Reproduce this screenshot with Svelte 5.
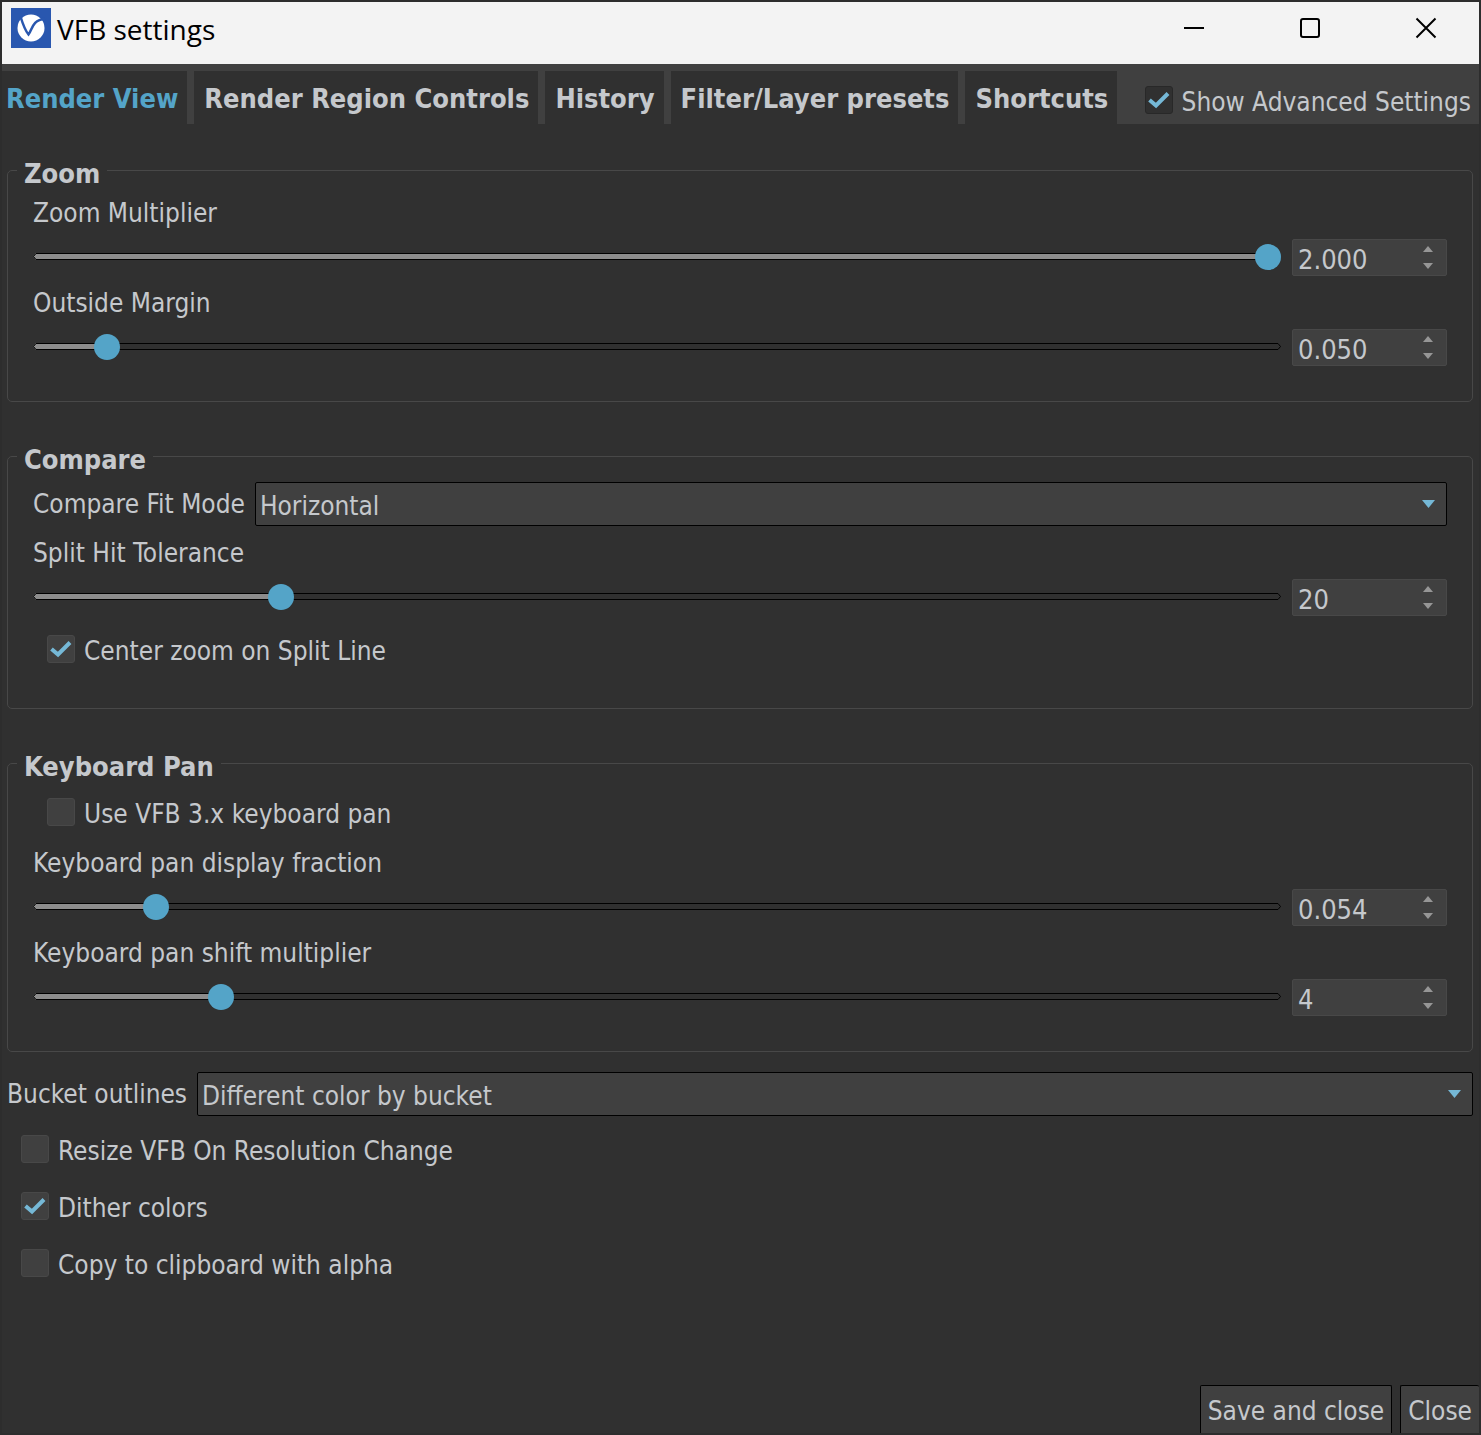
<script>
  const tabs = ['Render View', 'Render Region Controls', 'History', 'Filter/Layer presets', 'Shortcuts'];
  let active = $state(0);
  let advanced = $state(true);

  let fitMode = $state('Horizontal');
  let centerZoom = $state(true);
  let legacyPan = $state(false);
  let outlines = $state('Different color by bucket');
  let resizeOnChange = $state(false);
  let dither = $state(true);
  let copyAlpha = $state(false);

  let zoom = $state([
    { id: 'zoom-multiplier', label: 'Zoom Multiplier', value: 2, min: 1, max: 2, step: 0.001, digits: 3 },
    { id: 'outside-margin', label: 'Outside Margin', value: 0.05, min: 0, max: 1, step: 0.001, digits: 3 }
  ]);
  let compare = $state([
    { id: 'split-tolerance', label: 'Split Hit Tolerance', value: 20, min: 1, max: 100, step: 1, digits: 0 }
  ]);
  let pan = $state([
    { id: 'pan-fraction', label: 'Keyboard pan display fraction', value: 0.054, min: 0.01, max: 0.5, step: 0.001, digits: 3 },
    { id: 'pan-shift', label: 'Keyboard pan shift multiplier', value: 4, min: 1, max: 22, step: 1, digits: 0 }
  ]);

  function nudge(field, direction) {
    const next = Number(field.value) + direction * field.step;
    field.value = Math.min(field.max, Math.max(field.min, next));
  }

  function commit(field, event) {
    const typed = Number(event.currentTarget.value);
    if (!Number.isNaN(typed)) field.value = Math.min(field.max, Math.max(field.min, typed));
  }

  const fraction = (field) => (field.value - field.min) / (field.max - field.min);
</script>

{#snippet slider(field)}
  <div class="field">
    <label class="label" for={field.id}>{field.label}</label>
    <div class="slider-row">
      <div class="slider" style:--fraction={fraction(field)}>
        <svg class="tip" viewBox="0 0 3 7" aria-hidden="true"><path class="tip-fill" d="M3 0L0 3.5L3 7Z" /><path class="tip-line" d="M3 .5L.5 3.5L3 6.5" /></svg>
        <div class="track"></div>
        <svg class="tip" viewBox="0 0 3 7" aria-hidden="true"><path class="tip-line" d="M0 .5L2.5 3.5L0 6.5" /></svg>
        <input id={field.id} type="range" min={field.min} max={field.max} step={field.step} bind:value={field.value} />
      </div>
      <div class="spin">
        <input type="text" inputmode="decimal" aria-label={`${field.label} value`} value={Number(field.value).toFixed(field.digits)} onchange={(e) => commit(field, e)} />
        <div class="steps">
          <button type="button" aria-label={`Increase ${field.label}`} onclick={() => nudge(field, 1)}>
            <svg width="10" height="6" viewBox="0 0 10 6"><path d="M0 6L5 0L10 6Z" /></svg>
          </button>
          <button type="button" aria-label={`Decrease ${field.label}`} onclick={() => nudge(field, -1)}>
            <svg width="10" height="6" viewBox="0 0 10 6"><path d="M0 0L5 6L10 0Z" /></svg>
          </button>
        </div>
      </div>
    </div>
  </div>
{/snippet}

{#snippet tick()}
  <svg class="tick" viewBox="0 0 28 28" aria-hidden="true"><path d="M4.5 14L11 19.5L23 7.500" /></svg>
{/snippet}

{#snippet chevron()}
  <svg class="chevron" width="13" height="8" viewBox="0 0 13 8" aria-hidden="true"><path d="M0 0H13L6.5 8Z" /></svg>
{/snippet}

<div class="window">
  <header class="titlebar">
    <svg class="logo" viewBox="0 0 40 40" aria-hidden="true">
      <rect width="40" height="40" fill="#2957af" />
      <circle cx="20" cy="20" r="13.500" fill="#fff" />
      <path d="M9.500 8.500C11.500 15 14 22.500 17.500 26.500C21 22.500 21 11.500 34 11" fill="none" stroke="#2957af" stroke-width="2.500" />
    </svg>
    <h1>VFB settings</h1>
    <div class="window-controls">
      <button type="button" aria-label="Minimize"><svg width="22" height="22" viewBox="0 0 22 22"><path d="M1 11H21" /></svg></button>
      <button type="button" aria-label="Maximize"><svg width="22" height="22" viewBox="0 0 22 22"><rect x="2" y="2" width="18" height="18" rx="2" /></svg></button>
      <button type="button" aria-label="Close window"><svg width="22" height="22" viewBox="0 0 22 22"><path d="M1.500 1.500L20.500 20.500M20.500 1.500L1.500 20.500" /></svg></button>
    </div>
  </header>

  <nav class="tabbar">
    <div class="tabs" role="tablist">
      {#each tabs as tab, i}
        <button type="button" role="tab" class="tab" class:active={active === i} aria-selected={active === i} onclick={() => (active = i)}>{tab}</button>
      {/each}
    </div>
    <label class="check advanced">
      <span class="box"><input type="checkbox" bind:checked={advanced} />{@render tick()}</span>
      Show Advanced Settings
    </label>
  </nav>

  <main>
    <fieldset>
      <legend>Zoom</legend>
      <div class="stack">
        {#each zoom as field}{@render slider(field)}{/each}
      </div>
    </fieldset>

    <fieldset>
      <legend>Compare</legend>
      <div class="stack">
        <div class="select-row">
          <label class="label" for="fit-mode">Compare Fit Mode</label>
          <div class="select">
            <select id="fit-mode" bind:value={fitMode}>
              <option>Horizontal</option>
              <option>Vertical</option>
            </select>
            {@render chevron()}
          </div>
        </div>
        {#each compare as field}{@render slider(field)}{/each}
        <label class="check">
          <span class="box"><input type="checkbox" bind:checked={centerZoom} />{@render tick()}</span>
          Center zoom on Split Line
        </label>
      </div>
    </fieldset>

    <fieldset>
      <legend>Keyboard Pan</legend>
      <div class="stack">
        <label class="check">
          <span class="box"><input type="checkbox" bind:checked={legacyPan} />{@render tick()}</span>
          Use VFB 3.x keyboard pan
        </label>
        {#each pan as field}{@render slider(field)}{/each}
      </div>
    </fieldset>

    <div class="stack">
      <div class="select-row">
        <label class="label" for="outlines">Bucket outlines</label>
        <div class="select">
          <select id="outlines" bind:value={outlines}>
            <option>Different color by bucket</option>
            <option>Same color</option>
          </select>
          {@render chevron()}
        </div>
      </div>
      <label class="check">
        <span class="box"><input type="checkbox" bind:checked={resizeOnChange} />{@render tick()}</span>
        Resize VFB On Resolution Change
      </label>
      <label class="check">
        <span class="box"><input type="checkbox" bind:checked={dither} />{@render tick()}</span>
        Dither colors
      </label>
      <label class="check">
        <span class="box"><input type="checkbox" bind:checked={copyAlpha} />{@render tick()}</span>
        Copy to clipboard with alpha
      </label>
    </div>
  </main>

  <footer>
    <button type="button" class="action">Save and close</button>
    <button type="button" class="action">Close</button>
  </footer>
</div>

<style>
  :global(body) {
    background: #303030;
  }

  .window {
    --bg: #303030;
    --raised: #404040;
    --edge: #484848;
    --text: #c5c8cc;
    --accent: #54a4c8;
    --accent-soft: #75b8d6;
    box-sizing: border-box;
    min-height: 100vh;
    display: flex;
    flex-direction: column;
    border: 2px solid #2d2d2d;
    background: var(--bg);
    color: var(--text);
    font-family: "DejaVu Sans Condensed", "DejaVu Sans", sans-serif;
    font-size: 26px;
    line-height: 34px;
  }

  button,
  input,
  select {
    box-sizing: border-box;
    margin: 0;
    padding: 0;
    border: 0;
    background: none;
    color: inherit;
    font: inherit;
  }

  svg {
    display: block;
  }

  .titlebar {
    display: flex;
    align-items: flex-start;
    height: 62px;
    background: #f3f3f3;
    color: #000;
  }

  .logo {
    width: 40px;
    height: 40px;
    margin: 6px 6px 0 9px;
  }

  h1 {
    flex: 1;
    margin: 0;
    padding-top: 9px;
    font-family: "Open Sans", sans-serif;
    font-size: 28px;
    font-weight: 400;
    line-height: 36px;
  }

  .window-controls {
    display: flex;
    gap: 94px;
    padding: 3px 42px 0 0;
  }

  .window-controls button {
    display: grid;
    place-items: center;
    width: 22px;
    height: 46px;
  }

  .window-controls svg {
    fill: none;
    stroke: #000;
    stroke-width: 2;
  }

  .tabbar {
    display: flex;
    justify-content: space-between;
    padding-top: 7px;
    background: var(--raised);
  }

  .tabs {
    display: flex;
    gap: 7px;
  }

  .tab {
    height: 53px;
    padding: 2px 9px 0 10px;
    background: var(--bg);
    font-size: 27px;
    font-weight: 700;
    white-space: nowrap;
  }

  .tab:first-child {
    padding-left: 4px;
  }

  .tab.active {
    color: var(--accent);
  }

  main {
    flex: 1;
    padding: 30px 6px 0 5px;
  }

  fieldset {
    min-width: 0;
    margin: 0 0 38px;
    padding: 10px 25px 35px;
    border: 1px solid var(--edge);
    border-radius: 5px;
  }

  fieldset:last-of-type {
    margin-bottom: 20px;
  }

  legend {
    height: 32px;
    box-sizing: border-box;
    margin-left: -16px;
    padding: 4px 7px 0;
    font-size: 27px;
    font-weight: 700;
    line-height: 32px;
  }

  .stack {
    display: flex;
    flex-direction: column;
    gap: 10px;
  }

  .field {
    display: flex;
    flex-direction: column;
    gap: 9px;
  }

  .slider-row {
    display: flex;
    align-items: flex-start;
    gap: 11px;
  }

  .slider {
    position: relative;
    box-sizing: border-box;
    flex: 1;
    display: flex;
    align-items: flex-start;
    height: 26px;
    margin-top: 5px;
    padding-top: 9px;
  }

  .track {
    --stop: calc((100% - 26px) * var(--fraction) + 13px);
    flex: 1;
    box-sizing: border-box;
    height: 7px;
    border: solid #000;
    border-width: 1px 0;
    background: linear-gradient(to right, #8c8c8c var(--stop), transparent var(--stop));
  }

  .tip {
    width: 3px;
    height: 7px;
  }

  .tip-fill {
    fill: #8c8c8c;
  }

  .tip-line {
    fill: none;
    stroke: #000;
  }

  .slider input {
    position: absolute;
    inset: 0;
    width: 100%;
    height: 26px;
    appearance: none;
  }

  .slider input::-webkit-slider-thumb {
    appearance: none;
    width: 26px;
    height: 26px;
    border: 0;
    border-radius: 50%;
    background: var(--accent);
  }

  .spin {
    box-sizing: border-box;
    display: flex;
    width: 155px;
    height: 37px;
    border: 1px solid var(--edge);
    border-radius: 2px;
    background: var(--raised);
  }

  .spin > input {
    flex: 1;
    min-width: 0;
    padding: 4px 0 0 5px;
    font-size: 27px;
  }

  .steps {
    display: flex;
    flex-direction: column;
    justify-content: center;
    width: 36px;
  }

  .steps button {
    display: grid;
    place-items: center;
    height: 17px;
    fill: #969696;
  }

  .check {
    display: flex;
    align-items: flex-start;
    gap: 9px;
    padding: 8px 0 5px 14px;
  }

  .box {
    position: relative;
    flex: none;
    width: 28px;
    height: 28px;
    margin-top: 1px;
  }

  .box input {
    display: block;
    width: 28px;
    height: 28px;
    appearance: none;
    border: 1px solid var(--edge);
    border-radius: 3px;
    background: var(--raised);
  }

  .tick {
    position: absolute;
    inset: 0;
    visibility: hidden;
    fill: none;
    stroke: var(--accent-soft);
    stroke-width: 4;
    pointer-events: none;
  }

  input:checked + .tick {
    visibility: visible;
  }

  .advanced {
    padding: 14px 8px 5px 14px;
    white-space: nowrap;
  }

  .advanced .box input {
    border-color: #282828;
    background: var(--bg);
  }

  .select-row {
    display: flex;
    align-items: center;
    gap: 10px;
  }

  .select {
    position: relative;
    flex: 1;
  }

  select {
    display: block;
    width: 100%;
    height: 44px;
    padding: 3px 40px 0 4px;
    appearance: none;
    border: 1px solid #000;
    border-radius: 2px;
    background: var(--raised);
  }

  .chevron {
    position: absolute;
    top: 18px;
    right: 12px;
    fill: var(--accent-soft);
    pointer-events: none;
  }

  footer {
    display: flex;
    justify-content: flex-end;
    gap: 8px;
  }

  .action {
    height: 48px;
    padding: 2px 7px 0;
    border: 1px solid #000;
    border-bottom: 0;
    border-radius: 2px 2px 0 0;
    background: var(--raised);
  }

  .action:last-child {
    border-right: 0;
  }

  button:focus-visible,
  input:focus-visible,
  select:focus-visible {
    outline: 2px solid var(--accent);
  }
</style>
